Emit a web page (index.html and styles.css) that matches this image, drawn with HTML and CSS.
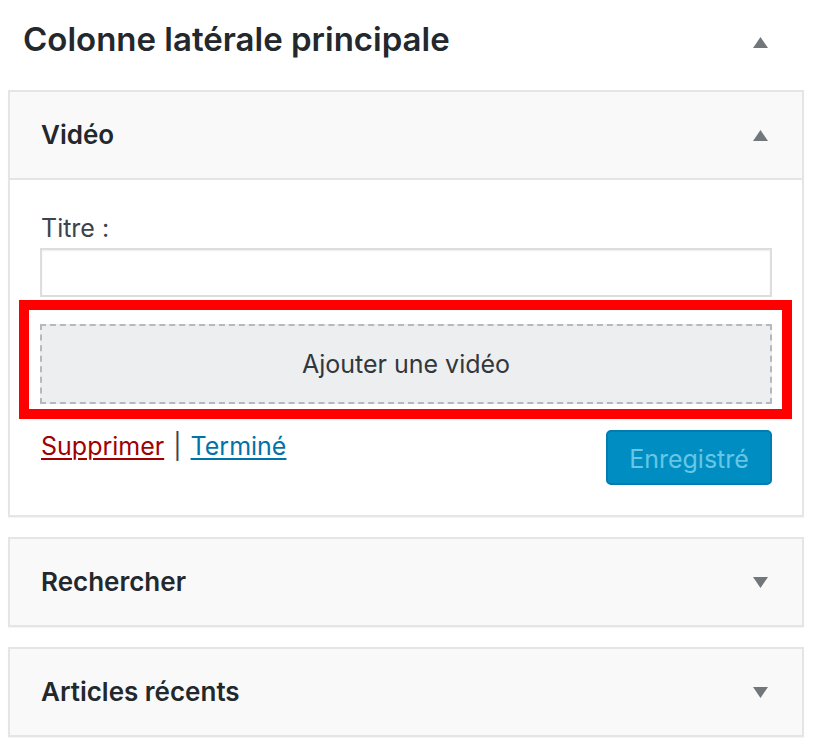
FILE: index.html
```html
<!DOCTYPE html>
<html lang="fr">
<head>
<meta charset="utf-8">
<title>Colonne latérale principale</title>
<link rel="stylesheet" href="styles.css">
</head>
<body>
<div class="sidebar">
  <div class="sidebar-head">
    <h2 class="sidebar-title">Colonne latérale principale</h2>
    <svg class="arrow arrow-title" width="15" height="11" viewBox="0 0 15 11"><polygon points="7.5,0 15,11 0,11"/></svg>
  </div>

  <div class="widget">
    <div class="widget-top">
      <h3 class="widget-title">Vidéo</h3>
      <svg class="arrow" width="15" height="11" viewBox="0 0 15 11"><polygon points="7.5,0 15,11 0,11"/></svg>
    </div>
    <div class="widget-inside">
      <label class="field-label" for="titre">Titre :</label>
      <input class="field-input" id="titre" type="text">
      <div class="placeholder">Ajouter une vidéo</div>
      <div class="widget-actions">
        <div class="links">
          <a class="link-delete" href="#">Supprimer</a> <span class="sep">|</span> <a class="link-done" href="#">Terminé</a>
        </div>
        <button class="btn-primary" disabled>Enregistré</button>
      </div>
    </div>
  </div>

  <div class="widget">
    <div class="widget-top">
      <h3 class="widget-title">Rechercher</h3>
      <svg class="arrow" width="15" height="11" viewBox="0 0 15 11"><polygon points="0,0 15,0 7.5,11"/></svg>
    </div>
  </div>

  <div class="widget">
    <div class="widget-top">
      <h3 class="widget-title">Articles récents</h3>
      <svg class="arrow" width="15" height="11" viewBox="0 0 15 11"><polygon points="0,0 15,0 7.5,11"/></svg>
    </div>
  </div>
</div>
</body>
</html>
```

FILE: styles.css
```css
html, body {
  margin: 0;
  padding: 0;
  background: #ffffff;
}

body {
  font-family: Inter, "Liberation Sans", Arial, sans-serif;
  color: #23282d;
}

.sidebar {
  width: 796px;
  margin-left: 8px;
}

.sidebar-head {
  display: flex;
  align-items: center;
  justify-content: space-between;
  height: 77px;
  padding: 0 36px 0 15px;
  margin-bottom: 13px;
}

.sidebar-title {
  margin: 0;
  font-size: 33px;
  line-height: 40px;
  font-weight: 600;
  color: #23282d;
}

.arrow {
  display: block;
  fill: #72777c;
}

.arrow-title {
  margin-top: 8px;
}

.widget {
  background: #fff;
  border: 2px solid #e5e5e5;
  box-shadow: 0 1px 1px rgba(0, 0, 0, 0.04);
  margin-bottom: 20px;
}

.widget-top {
  display: flex;
  align-items: center;
  justify-content: space-between;
  height: 86px;
  padding: 0 34px 0 31px;
  background: #f9f9f9;
}

.widget-title {
  margin: 0;
  font-size: 26px;
  line-height: 36px;
  font-weight: 600;
  color: #23282d;
}

.widget-inside {
  border-top: 2px solid #e5e5e5;
  padding: 33px 30px 30px 30px;
}

.field-label {
  display: block;
  font-size: 25px;
  line-height: 30px;
  color: #3c434a;
  padding-left: 1px;
}

.field-input {
  display: block;
  box-sizing: border-box;
  width: 100%;
  height: 49px;
  margin: 5px 0 0 0;
  border: 2px solid #dddddd;
  box-shadow: inset 0 1px 2px rgba(0, 0, 0, 0.07);
  background: #fff;
  font: inherit;
}

.placeholder {
  position: relative;
  box-sizing: border-box;
  height: 80px;
  margin-top: 27px;
  border: 2px dashed #b4b9be;
  background: #edeef0;
  display: flex;
  align-items: center;
  justify-content: center;
  font-size: 25px;
  color: #32373c;
}

/* red annotation frame drawn over the placeholder */
.placeholder::after {
  content: "";
  position: absolute;
  top: -26px;
  left: -23px;
  right: -22px;
  bottom: -17px;
  border: 10px solid #ff0000;
  pointer-events: none;
}

.widget-actions {
  display: flex;
  justify-content: space-between;
  align-items: flex-start;
  margin-top: 26px;
}

.links {
  margin-top: 1px;
  padding-left: 1px;
  font-size: 25px;
  line-height: 30px;
  color: #444;
}

.links a {
  text-decoration: underline;
  text-decoration-thickness: 2px;
  text-underline-offset: 3px;
}

.link-delete {
  color: #a00000;
}

.link-done {
  color: #0073aa;
}

.sep {
  color: #444;
  padding: 0 2px;
}

.btn-primary {
  box-sizing: border-box;
  width: 166px;
  height: 55px;
  border: 2px solid #007cb2;
  border-radius: 5px;
  background: #008ec2;
  color: #66c6e4;
  font-family: Inter, "Liberation Sans", Arial, sans-serif;
  font-size: 25px;
  padding: 2px 0 0 0;
}
```
